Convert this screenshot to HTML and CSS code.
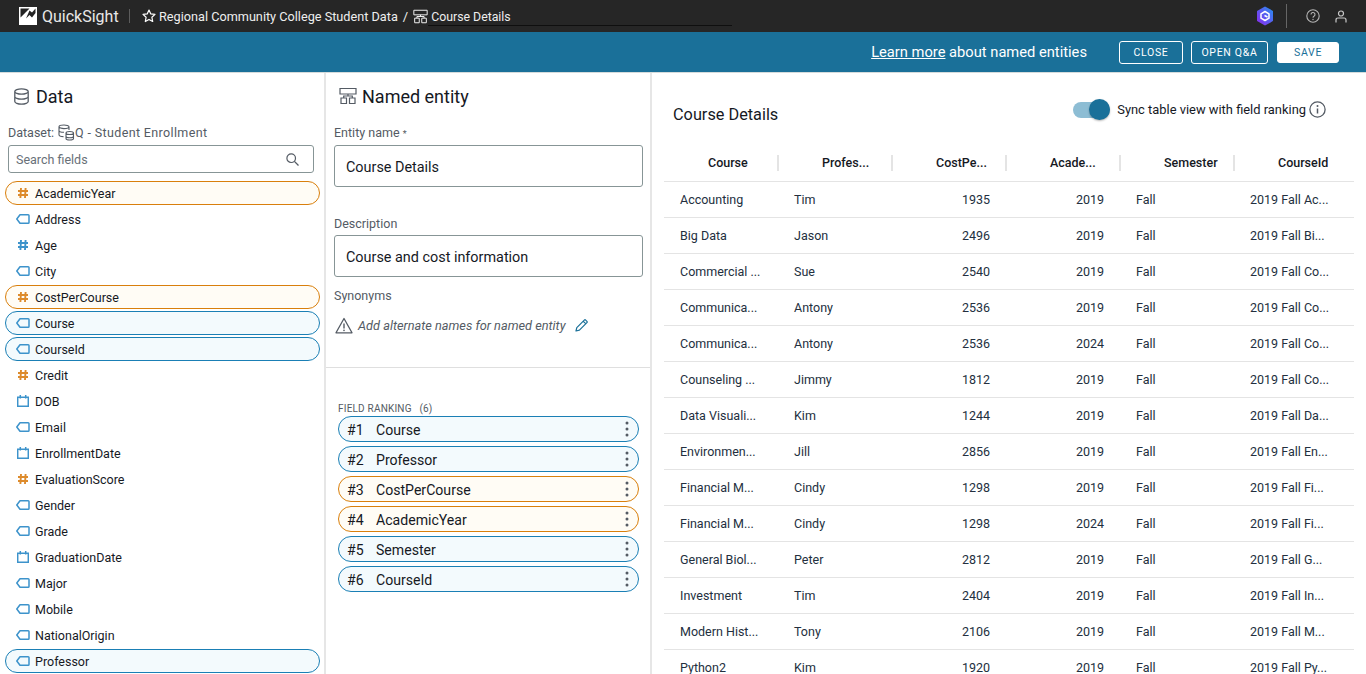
FILE: index.html
```html
<!DOCTYPE html>
<html lang="en">
<head>
<meta charset="utf-8">
<title>QuickSight - Course Details</title>
<link rel="stylesheet" href="styles.css">
</head>
<body>
<svg class="defs" width="0" height="0" aria-hidden="true">
  <defs>
    <symbol id="i-hash" viewBox="0 0 12 12"><path d="M4 1 3.400 11M8.600 1 8 11M1 4h10M1 8h10" fill="none" stroke="currentColor" stroke-width="1.900"/></symbol>
    <symbol id="i-tag" viewBox="0 0 14 12"><path d="M4 1.700h8.200a.8.8 0 0 1 .8.8v7a.8.8 0 0 1-.8.8H4L.8 6z" fill="none" stroke="currentColor" stroke-width="1.500" stroke-linejoin="round"/></symbol>
    <symbol id="i-cal" viewBox="0 0 12 12"><path d="M.7 2.200h10.600v9H.7zM3.300 0v3.500M8.700 0v3.500" fill="none" stroke="currentColor" stroke-width="1.500"/></symbol>
    <symbol id="i-entity" viewBox="0 0 18 18"><path d="M1 1.500h16v5.500H1zM2 11h5.500v5.500H2zM10.500 11H16v5.500h-5.500zM4.700 11V9h8.600v2M9 7v2" fill="none" stroke="currentColor" stroke-width="1.200"/></symbol>
    <symbol id="i-dots" viewBox="0 0 4 16"><circle cx="2" cy="2" r="1.500"/><circle cx="2" cy="8" r="1.500"/><circle cx="2" cy="14" r="1.500"/></symbol>
  </defs>
</svg>

<header class="topbar">
  <svg class="logo" width="18" height="18" viewBox="0 0 18 18"><path d="M0 0h18v18H0z" fill="#fff"/><path d="M1.500 1.500h9l-9 9zM7 11.500l3.500-3.500 2.500 2.500 3.500-4.500V1.500L13 5.500 10.500 3.500z" fill="#232323"/></svg>
  <span class="brand">QuickSight</span>
  <span class="topsep"></span>
  <svg class="star" width="14" height="14" viewBox="0 0 14 14"><path d="M7 1l1.800 3.900 4.200.5-3.100 2.900.8 4.200L7 10.400 3.300 12.500l.8-4.200L1 5.400l4.200-.5z" fill="none" stroke="#fff" stroke-width="1.200" stroke-linejoin="round"/></svg>
  <span class="crumb">Regional Community College Student Data</span>
  <span class="crumb slash">/</span>
  <svg class="crumb-icon" width="15" height="15"><use href="#i-entity"/></svg>
  <span class="crumb current">Course Details</span>
  <div class="topright">
    <svg class="hex" width="18" height="20" viewBox="0 0 18 20"><defs><linearGradient id="g" x1="0" y1="1" x2="1" y2="0"><stop offset="0" stop-color="#8a2cf0"/><stop offset="1" stop-color="#2a8cf0"/></linearGradient></defs><path d="M9 1.500l7 4v9l-7 4-7-4v-9z" fill="url(#g)" stroke="url(#g)" stroke-width="2" stroke-linejoin="round"/><path d="M9 5.500l4 2.300v4.400l-4 2.300-4-2.300V7.800z" fill="none" stroke="#fff" stroke-width="1.500" stroke-linejoin="round"/><path d="M8.500 9.500l3 1.500" stroke="#fff" stroke-width="1.500"/></svg>
    <span class="rightsep"></span>
    <svg class="help" width="14" height="14" viewBox="0 0 14 14"><circle cx="7" cy="7" r="6.200" fill="none" stroke="#b5b5b5" stroke-width="1.100"/><path d="M5 5.500a2 2 0 1 1 3 1.700c-.7.400-1 .8-1 1.500" fill="none" stroke="#b5b5b5" stroke-width="1.100"/><circle cx="7" cy="10.500" r=".7" fill="#b5b5b5"/></svg>
    <svg class="user" width="12" height="13" viewBox="0 0 12 13"><circle cx="6" cy="3.500" r="2.500" fill="none" stroke="#c8c8c8" stroke-width="1.200"/><path d="M1 12.500V10q0-2 2-2h6q2 0 2 2v2.500" fill="none" stroke="#c8c8c8" stroke-width="1.200"/></svg>
  </div>
</header>

<div class="actionbar">
  <span class="learn"><a href="#">Learn more</a> about named entities</span>
  <button class="btn">CLOSE</button>
  <button class="btn">OPEN Q&amp;A</button>
  <button class="btn primary">SAVE</button>
</div>

<main class="columns">
  <section class="col data">
    <h2 class="title">
      <svg class="title-icon" width="15" height="17" viewBox="0 0 15 17"><path d="M.8 3.500v10c0 1.400 3 2.700 6.700 2.700s6.700-1.300 6.700-2.700v-10M.8 3.500c0 1.400 3 2.700 6.700 2.700s6.700-1.300 6.700-2.700S11.200.8 7.500.8.800 2.100.8 3.500zM.8 8.500c0 1.400 3 2.700 6.700 2.700s6.700-1.300 6.700-2.700" fill="none" stroke="#545b64" stroke-width="1.300"/></svg>
      Data
    </h2>
    <div class="dataset">Dataset:
      <svg class="ds-icon" width="17" height="17" viewBox="0 0 17 17"><path d="M1 2.800v8c0 1 2 1.800 4.500 1.800M1 2.800C1 1.800 3.500 1 6 1s5 .8 5 1.800S8.500 4.600 6 4.600 1 3.800 1 2.800zM11 2.800V6M1 6.500c0 1 2 1.800 5 1.800" fill="none" stroke="#545b64" stroke-width="1.100"/><path d="M8 9c0-.9 1.600-1.500 3.700-1.500s3.800.6 3.800 1.500v5.500c0 .9-1.700 1.500-3.800 1.500S8 15.400 8 14.500zM8 9c0 .9 1.600 1.500 3.700 1.500s3.800-.6 3.800-1.500M8 12.300c0 .9 1.600 1.500 3.700 1.500s3.800-.6 3.800-1.500" fill="none" stroke="#545b64" stroke-width="1.100"/></svg>
      <span class="ds-name">Q - Student Enrollment</span>
    </div>
    <div class="search">
      <span>Search fields</span>
      <svg width="13" height="13" viewBox="0 0 13 13"><circle cx="5.200" cy="5.200" r="4.300" fill="none" stroke="#545b64" stroke-width="1.200"/><path d="M8.400 8.400 12.500 12.500" stroke="#545b64" stroke-width="1.300"/></svg>
    </div>
    <ul class="fields">
      <li class="field sel-orange"><svg class="fi hash orange"><use href="#i-hash"/></svg>AcademicYear</li>
      <li class="field"><svg class="fi tag blue"><use href="#i-tag"/></svg>Address</li>
      <li class="field"><svg class="fi hash blue"><use href="#i-hash"/></svg>Age</li>
      <li class="field"><svg class="fi tag blue"><use href="#i-tag"/></svg>City</li>
      <li class="field sel-orange"><svg class="fi hash orange"><use href="#i-hash"/></svg>CostPerCourse</li>
      <li class="field sel-blue"><svg class="fi tag blue"><use href="#i-tag"/></svg>Course</li>
      <li class="field sel-blue"><svg class="fi tag blue"><use href="#i-tag"/></svg>CourseId</li>
      <li class="field"><svg class="fi hash orange"><use href="#i-hash"/></svg>Credit</li>
      <li class="field"><svg class="fi cal blue"><use href="#i-cal"/></svg>DOB</li>
      <li class="field"><svg class="fi tag blue"><use href="#i-tag"/></svg>Email</li>
      <li class="field"><svg class="fi cal blue"><use href="#i-cal"/></svg>EnrollmentDate</li>
      <li class="field"><svg class="fi hash orange"><use href="#i-hash"/></svg>EvaluationScore</li>
      <li class="field"><svg class="fi tag blue"><use href="#i-tag"/></svg>Gender</li>
      <li class="field"><svg class="fi tag blue"><use href="#i-tag"/></svg>Grade</li>
      <li class="field"><svg class="fi cal blue"><use href="#i-cal"/></svg>GraduationDate</li>
      <li class="field"><svg class="fi tag blue"><use href="#i-tag"/></svg>Major</li>
      <li class="field"><svg class="fi tag blue"><use href="#i-tag"/></svg>Mobile</li>
      <li class="field"><svg class="fi tag blue"><use href="#i-tag"/></svg>NationalOrigin</li>
      <li class="field sel-blue"><svg class="fi tag blue"><use href="#i-tag"/></svg>Professor</li>
    </ul>
  </section>

  <section class="col entity">
    <div class="entity-form">
      <h2 class="title entity-title"><svg class="title-icon-e" width="18" height="18"><use href="#i-entity"/></svg>Named entity</h2>
      <label class="lbl first">Entity name <span class="req">*</span></label>
      <div class="input">Course Details</div>
      <label class="lbl desc">Description</label>
      <div class="input second">Course and cost information</div>
      <label class="lbl syn">Synonyms</label>
      <div class="synrow">
        <svg width="18" height="17" viewBox="0 0 18 17"><path d="M9 1.500 17 15.800H1z" fill="none" stroke="#545b64" stroke-width="1.300" stroke-linejoin="round"/><path d="M9 6.500v5" stroke="#545b64" stroke-width="1.400"/><circle cx="9" cy="13.400" r=".8" fill="#545b64"/></svg>
        <em>Add alternate names for named entity</em>
        <svg class="pencil" width="13" height="13" viewBox="0 0 13 13"><path d="M1 12l.8-3.400L9.300 1.100a1 1 0 0 1 1.400 0l1.200 1.200a1 1 0 0 1 0 1.400L4.400 11.200zM8.300 2.300l2.400 2.400" fill="none" stroke="#1a7099" stroke-width="1.200" stroke-linejoin="round"/></svg>
      </div>
    </div>
    <div class="ranking">
      <div class="rank-head">FIELD RANKING <span>(6)</span></div>
      <ol class="ranks">
        <li class="rank r-blue"><b>#1</b><span>Course</span><svg class="dots" width="4" height="16"><use href="#i-dots"/></svg></li>
        <li class="rank r-blue"><b>#2</b><span>Professor</span><svg class="dots" width="4" height="16"><use href="#i-dots"/></svg></li>
        <li class="rank r-orange"><b>#3</b><span>CostPerCourse</span><svg class="dots" width="4" height="16"><use href="#i-dots"/></svg></li>
        <li class="rank r-orange"><b>#4</b><span>AcademicYear</span><svg class="dots" width="4" height="16"><use href="#i-dots"/></svg></li>
        <li class="rank r-blue"><b>#5</b><span>Semester</span><svg class="dots" width="4" height="16"><use href="#i-dots"/></svg></li>
        <li class="rank r-blue"><b>#6</b><span>CourseId</span><svg class="dots" width="4" height="16"><use href="#i-dots"/></svg></li>
      </ol>
    </div>
  </section>

  <section class="col preview">
    <div class="preview-head">
      <h3>Course Details</h3>
      <div class="sync">
        <span class="toggle"><i></i></span>
        <span>Sync table view with field ranking</span>
        <svg class="info" width="17" height="17" viewBox="0 0 17 17"><circle cx="8.500" cy="8.500" r="7.600" fill="none" stroke="#545b64" stroke-width="1.300"/><path d="M8.500 7.500v5" stroke="#545b64" stroke-width="1.500"/><circle cx="8.500" cy="5" r="1" fill="#545b64"/></svg>
      </div>
    </div>
    <div class="table">
      <div class="row head">
        <div class="c">Course</div><div class="c">Profes...</div><div class="c">CostPe...</div><div class="c">Acade...</div><div class="c">Semester</div><div class="c">CourseId</div>
      </div>
      <div class="row"><div class="c">Accounting</div><div class="c">Tim</div><div class="c r">1935</div><div class="c r">2019</div><div class="c">Fall</div><div class="c">2019 Fall Ac...</div></div>
      <div class="row"><div class="c">Big Data</div><div class="c">Jason</div><div class="c r">2496</div><div class="c r">2019</div><div class="c">Fall</div><div class="c">2019 Fall Bi...</div></div>
      <div class="row"><div class="c">Commercial ...</div><div class="c">Sue</div><div class="c r">2540</div><div class="c r">2019</div><div class="c">Fall</div><div class="c">2019 Fall Co...</div></div>
      <div class="row"><div class="c">Communica...</div><div class="c">Antony</div><div class="c r">2536</div><div class="c r">2019</div><div class="c">Fall</div><div class="c">2019 Fall Co...</div></div>
      <div class="row"><div class="c">Communica...</div><div class="c">Antony</div><div class="c r">2536</div><div class="c r">2024</div><div class="c">Fall</div><div class="c">2019 Fall Co...</div></div>
      <div class="row"><div class="c">Counseling ...</div><div class="c">Jimmy</div><div class="c r">1812</div><div class="c r">2019</div><div class="c">Fall</div><div class="c">2019 Fall Co...</div></div>
      <div class="row"><div class="c">Data Visuali...</div><div class="c">Kim</div><div class="c r">1244</div><div class="c r">2019</div><div class="c">Fall</div><div class="c">2019 Fall Da...</div></div>
      <div class="row"><div class="c">Environmen...</div><div class="c">Jill</div><div class="c r">2856</div><div class="c r">2019</div><div class="c">Fall</div><div class="c">2019 Fall En...</div></div>
      <div class="row"><div class="c">Financial M...</div><div class="c">Cindy</div><div class="c r">1298</div><div class="c r">2019</div><div class="c">Fall</div><div class="c">2019 Fall Fi...</div></div>
      <div class="row"><div class="c">Financial M...</div><div class="c">Cindy</div><div class="c r">1298</div><div class="c r">2024</div><div class="c">Fall</div><div class="c">2019 Fall Fi...</div></div>
      <div class="row"><div class="c">General Biol...</div><div class="c">Peter</div><div class="c r">2812</div><div class="c r">2019</div><div class="c">Fall</div><div class="c">2019 Fall G...</div></div>
      <div class="row"><div class="c">Investment</div><div class="c">Tim</div><div class="c r">2404</div><div class="c r">2019</div><div class="c">Fall</div><div class="c">2019 Fall In...</div></div>
      <div class="row"><div class="c">Modern Hist...</div><div class="c">Tony</div><div class="c r">2106</div><div class="c r">2019</div><div class="c">Fall</div><div class="c">2019 Fall M...</div></div>
      <div class="row"><div class="c">Python2</div><div class="c">Kim</div><div class="c r">1920</div><div class="c r">2019</div><div class="c">Fall</div><div class="c">2019 Fall Py...</div></div>
    </div>
  </section>
</main>
</body>
</html>
```

FILE: styles.css
```css
* { box-sizing: border-box; }
html, body { height: 100%; }
body {
  margin: 0;
  overflow: hidden;
  font-family: Roboto, "Liberation Sans", sans-serif;
  color: #16191f;
  background: #fff;
  display: flex;
  flex-direction: column;
}
.defs { position: absolute; }
ul, ol { list-style: none; margin: 0; padding: 0; }
h2, h3 { margin: 0; font-weight: 400; }

.topbar {
  height: 32px;
  flex: none;
  background: #262626;
  color: #fff;
  display: flex;
  align-items: center;
  padding-left: 19px;
}
.brand { font-size: 16px; margin-left: 5px; color: #e8e8e8; width: 76px; }
.topsep { width: 1px; height: 14px; background: #5c5c5c; margin: 0 12px 0 11px; }
.star { margin-right: 3px; }
.crumb { font-size: 12.700px; color: #eee; }
.slash { margin: 0 5px; font-size: 13px; }
.crumb-icon { color: #eee; margin-right: 3px; }
.current { margin-top: 2px; font-size: 12.300px; position: relative; }
.current::after {
  content: "";
  position: absolute;
  left: -3px;
  top: 100%;
  width: 304px;
  height: 1px;
  margin-top: 1px;
  background: #0f0f0f;
}
.topright { margin-left: auto; display: flex; align-items: center; padding-right: 19px; }
.rightsep { width: 1px; height: 24px; background: #666; margin: 0 19px 0 12px; }
.user { margin-left: 15px; }

.actionbar {
  height: 41px;
  flex: none;
  background: #1a7099;
  color: #fff;
  display: flex;
  align-items: center;
  justify-content: flex-end;
  gap: 8px;
  padding-right: 27px;
  border-bottom: 1px solid #d5dbdb;
}
.learn { font-size: 14.700px; margin-right: 24px; }
.learn a { color: #fff; }
.btn {
  height: 23px;
  border: 1px solid #fff;
  border-radius: 3px;
  background: transparent;
  color: #fff;
  font: 400 10.500px Roboto, sans-serif;
  letter-spacing: .7px;
  padding: 0;
  width: 64px;
}
.btn:nth-of-type(2) { width: 77px; }
.btn.primary { background: #fff; color: #1a7099; width: 62px; margin-left: 1px; height: 21px; }

.columns { flex: 1; min-height: 0; display: flex; }
.col { border-right: 2px solid #e6e6e6; overflow: hidden; }

.data { width: 326px; flex: none; padding: 13px 0 0; }
.title { font-size: 18px; display: flex; align-items: center; height: 20px; }
.data .title { padding-left: 14px; gap: 7px; }
.title-icon { flex: none; }
.dataset {
  font-size: 12.500px;
  color: #545b64;
  margin: 17px 0 0 8px;
  display: flex;
  align-items: center;
  height: 18px;
}
.ds-icon { margin: 0 0 0 4px; }
.ds-name { letter-spacing: .36px; }
.search {
  margin: 4px 10px 0 8px;
  height: 28px;
  border: 1px solid #879596;
  border-radius: 3px;
  display: flex;
  align-items: center;
  justify-content: space-between;
  padding: 0 14px 0 7px;
  font-size: 12.500px;
  color: #687078;
}
.fields { margin-top: 8px; }
.field {
  height: 24px;
  margin: 0 5px 2px 5px;
  width: 315px;
  display: flex;
  align-items: center;
  padding-left: 11px;
  font-size: 12.500px;
  border: 1px solid transparent;
  border-radius: 12px;
}
.sel-orange { background: #fffcf5; border-color: #d97f0c; }
.sel-blue { background: #f3fafd; border-color: #1a7fb5; }
.fi { flex: none; margin-right: 6px; width: 12px; height: 12px; }
.tag { width: 14px; margin-left: -1px; margin-right: 5px; }
.orange { color: #dd8b2c; }
.blue { color: #3d93cb; }

.entity { width: 326px; flex: none; }
.entity-form { padding: 13px 8px 0; height: 295px; border-bottom: 1px solid #dfdfdf; }
.entity-title { padding-left: 5px; gap: 5px; }
.title-icon-e { color: #545b64; flex: none; }
.lbl { display: block; font-size: 12.500px; color: #545b64; height: 16px; line-height: 16px; }
.lbl.first { margin-top: 19px; }
.lbl.desc { margin-top: 29px; }
.lbl.syn { margin-top: 11px; }
.req { font-size: 9px; }
.input {
  height: 42px;
  margin: 4px 0 0;
  width: 309px;
  border: 1px solid #879596;
  border-radius: 3px;
  padding: 2px 0 0 11px;
  display: flex;
  align-items: center;
  font-size: 14.400px;
}
.input.second { margin-top: 3px; }
.synrow { display: flex; align-items: center; margin-top: 13px; padding-left: 1px; font-size: 12.750px; color: #545b64; }
.synrow em { margin-left: 5px; }
.pencil { margin-left: 9px; }

.ranking { padding: 34px 12px 0; }
.rank-head { font-size: 10px; color: #545b64; letter-spacing: .2px; height: 13px; line-height: 13px; }
.rank-head span { margin-left: 5px; }
.ranks { display: flex; flex-direction: column; gap: 4px; margin-top: 1px; }
.rank {
  height: 26px;
  width: 301px;
  border: 1px solid;
  border-radius: 13px;
  display: flex;
  align-items: center;
  padding: 0 9px 0 8px;
  font-size: 14.100px;
}
.rank b { font-weight: 400; width: 29px; padding-top: 2px; }
.rank span { flex: 1; padding-top: 2px; }
.r-blue { background: #f3fafd; border-color: #1a7fb5; }
.r-orange { background: #fffcf5; border-color: #d97f0c; }
.dots { fill: #545b64; }

.preview { flex: 1; min-width: 0; border-right: 0; padding: 0 12px; }
.preview-head { display: flex; justify-content: space-between; align-items: flex-start; height: 73px; padding: 28px 28px 0 9px; }
.preview-head h3 { font-size: 16.300px; margin-top: 4px; }
.sync { display: flex; align-items: center; gap: 5px; font-size: 12.900px; }
.info { margin-left: -2px; }
.toggle { width: 37px; height: 16px; border-radius: 8px; background: #8dbdd4; position: relative; margin-right: 2px; }
.toggle i { position: absolute; right: 0; top: -2.500px; width: 21px; height: 21px; border-radius: 50%; background: #1a7099; box-shadow: 0 1px 2px rgba(0,0,0,.3); }

.row {
  display: grid;
  grid-template-columns: repeat(5, 114px) 120px;
  height: 36px;
  border-bottom: 1px solid #e4e4e4;
  font-size: 12.500px;
  color: #232f3e;
  align-items: center;
}
.c { padding: 0 16px; white-space: nowrap; overflow: hidden; }
.r { text-align: right; }
.head { font-weight: 500; color: #16191f; padding-bottom: 2px; }
.head .c { height: 16px; line-height: 16px; padding: 0 0 0 44px; margin-right: -1px; border-right: 2px solid #e4e4e4; }
.head .c:last-child { border-right: 0; }
```
